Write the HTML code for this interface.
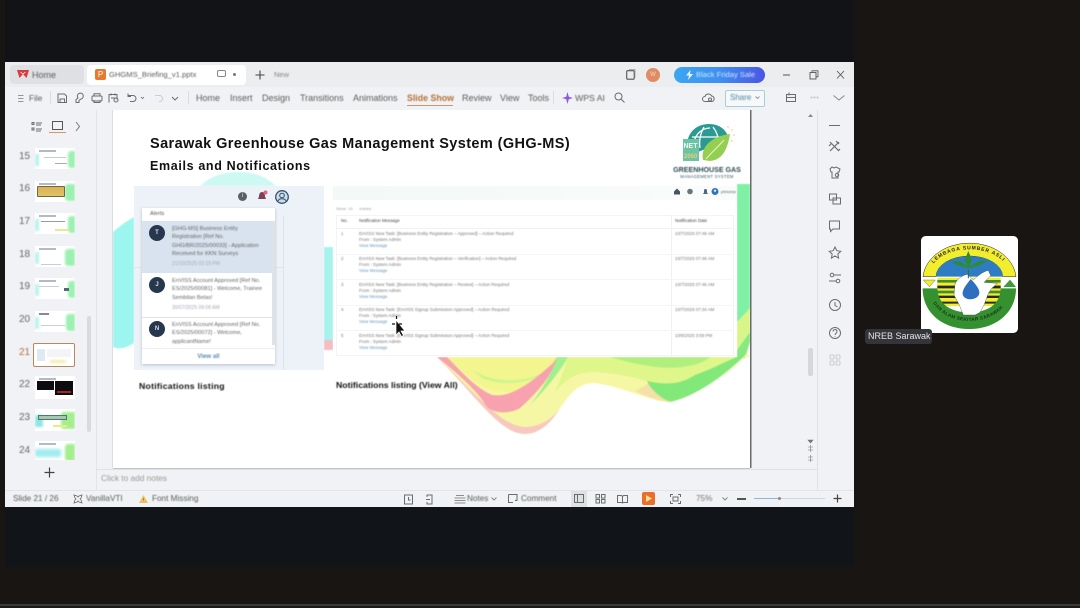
<!DOCTYPE html>
<html lang="en">
<head>
<meta charset="utf-8">
<title>GHGMS Briefing</title>
<style>
html,body{margin:0;padding:0;background:#191513;}
body{width:1080px;height:608px;overflow:hidden;position:relative;font-family:"Liberation Sans",sans-serif;}
.a,.t{position:absolute;}
.t{white-space:nowrap;color:#5c5c5c;font-size:9px;line-height:12px;filter:blur(.4px);}
svg{position:absolute;overflow:visible;}
.ic{fill:none;stroke:#6c6c6c;stroke-width:1;}
.num{font-size:10px;color:#666;}
.thumb{position:absolute;left:35px;width:40px;height:21px;background:#fff;overflow:hidden;}
.thumb i{position:absolute;display:block;}
.g{right:0;top:3px;width:7px;height:17px;background:#9cf0b0;border-radius:3px 0 0 3px;filter:blur(1px);}
.c{left:0;top:6px;width:4px;height:12px;background:#b8f2ee;filter:blur(1px);}
.l{left:4px;top:2px;width:17px;height:1.500px;background:#b5b9c4;}
.s1{font-size:5.600px;line-height:8.400px;color:#666;filter:blur(.4px);}
.s2{font-size:4.400px;line-height:6px;color:#777;filter:blur(.45px);}
.lnk{color:#6a98b8;}
</style>
</head>
<body>
<div class="a" style="left:5px;top:0;width:849px;height:62px;background:#111317;"></div>
<div class="a" style="left:5px;top:507px;width:849px;height:60px;background:#111418;"></div>
<div class="a" style="left:0;top:604px;width:1080px;height:2px;background:#3a3a38;"></div>
<div class="a" style="left:0;top:606px;width:1080px;height:2px;background:#1b1b1b;"></div>

<!-- window -->
<div class="a" style="left:5px;top:62px;width:849px;height:445px;background:#f1f2f5;"></div>
<div class="a" style="left:5px;top:62px;width:849px;height:25px;background:#eceDef;"></div>
<div class="a" style="left:10px;top:65px;width:74px;height:19px;background:#dfe0e3;border-radius:4px;"></div>
<div class="a" style="left:87px;top:65px;width:159px;height:20px;background:#fff;border-radius:4px;"></div>
<div class="a" style="left:96px;top:110px;width:1px;height:380px;background:#e3e4e7;"></div>
<div class="a" style="left:96px;top:469px;width:721px;height:1px;background:#e0e1e4;"></div>
<div class="a" style="left:5px;top:490px;width:849px;height:1px;background:#e3e4e7;"></div>
<div class="a" style="left:817px;top:110px;width:1px;height:380px;background:#e0e1e4;"></div>

<!-- tab row -->
<svg style="left:17px;top:69px" width="12" height="10" viewBox="0 0 12 10"><path d="M0 1h12l-2.500 8L6 5 2.500 9z" fill="#d8393a"/><path d="M3.500 3 6 5l2.500-2" fill="none" stroke="#fff" stroke-width=".8"/></svg>
<div class="t" style="left:32px;top:69px;">Home</div>
<div class="a" style="left:95px;top:69px;width:11px;height:11px;background:#e8792e;border-radius:2px;color:#fff;font-size:8px;line-height:11px;text-align:center;">P</div>
<div class="t" style="left:109px;top:69px;font-size:7.600px;">GHGMS_Briefing_v1.pptx</div>
<svg class="ic" style="left:217px;top:70px" width="9" height="9"><rect x=".5" y=".5" width="8" height="6" rx="1.500" stroke="#888"/></svg>
<div class="a" style="left:233px;top:73px;width:3px;height:3px;background:#777;border-radius:50%;"></div>
<svg style="left:255px;top:70px" width="10" height="10"><path d="M5 .5v9M.5 5h9" stroke="#444" stroke-width="1.100"/></svg>
<div class="t" style="left:274px;top:69px;font-size:7.500px;color:#888;">New</div>
<svg style="left:626px;top:69px" width="10" height="11"><rect x=".7" y="1.700" width="7.500" height="8.500" rx="1" fill="none" stroke="#555" stroke-width="1.100"/><path d="M3 .6h6v8" fill="none" stroke="#999" stroke-width=".8"/></svg>
<div class="a" style="left:646px;top:68px;width:14px;height:14px;background:#e08b62;border-radius:50%;color:#f6d7c5;font-size:6px;line-height:14px;text-align:center;">W</div>
<div class="a" style="left:674px;top:67px;width:91px;height:16px;border-radius:8px;background:linear-gradient(90deg,#3aa7f2,#3f8ff0 50%,#4b55e4);"></div>
<svg style="left:686px;top:70px" width="7" height="10"><path d="M4.500 0 0 5.500h3L2 10l5-6H4z" fill="#e8f4ff"/></svg>
<div class="t" style="left:696px;top:69px;font-size:7.600px;color:#cfe4fb;">Black Friday Sale</div>
<svg style="left:783px;top:70px" width="62" height="10"><path d="M0 5h7" stroke="#555"/><rect x="27" y="2.500" width="6" height="6.500" fill="none" stroke="#555" stroke-width=".9"/><path d="M29 2.500V.8h6v6h-2" fill="none" stroke="#555" stroke-width=".8"/><path d="M54 1l7 7.500M61 1l-7 7.500" stroke="#555" stroke-width=".9"/></svg>

<!-- toolbar -->
<svg style="left:18px;top:95px" width="6" height="8"><path d="M0 .5h5.500M0 3.500h5.500M0 6.500h5.500" stroke="#777" stroke-width=".8"/></svg>
<div class="t" style="left:29px;top:92px;font-size:8.300px;">File</div>
<div class="a" style="left:50px;top:91px;width:1px;height:13px;background:#dcdcdf;"></div>
<svg class="ic" style="left:57px;top:93px" width="120" height="11"><path d="M1 1h6.500L9.500 3v6.500H1zM3 9.500V6h4.500v3.500" /><path d="M19 9.500v-3l2-1.500a3 3 0 1 1 3 1l-2 1.500v2z"/><rect x="35" y="3" width="10" height="5" rx="1"/><path d="M37 3V.8h6V3M37 7v2.500h6V7"/><path d="M52 9.500V1.500h8v5M54 .5v2M58 .5v2M54 5h4"/><circle cx="59" cy="7" r="2"/><path d="M71 2.500h5a3 3 0 0 1 0 6h-3M71 .5v3h3"/><path d="M84 4l1.500 1.500L87 4" stroke-width=".8"/><path d="M98 2.500h5a3 3 0 0 1-1 6" stroke="#ccc"/><path d="M115 4l3 3 3-3" /></svg>
<div class="a" style="left:188px;top:91px;width:1px;height:13px;background:#dcdcdf;"></div>
<div class="t" style="left:196px;top:92px;">Home</div>
<div class="t" style="left:230px;top:92px;">Insert</div>
<div class="t" style="left:262px;top:92px;">Design</div>
<div class="t" style="left:300px;top:92px;">Transitions</div>
<div class="t" style="left:353px;top:92px;">Animations</div>
<div class="t" style="left:407px;top:92px;color:#b3703a;font-weight:bold;font-size:8.800px;">Slide Show</div>
<div class="a" style="left:407px;top:105px;width:46px;height:1px;background:#d0966a;"></div>
<div class="t" style="left:462px;top:92px;">Review</div>
<div class="t" style="left:500px;top:92px;">View</div>
<div class="t" style="left:528px;top:92px;">Tools</div>
<div class="a" style="left:553px;top:91px;width:1px;height:13px;background:#dcdcdf;"></div>
<svg style="left:562px;top:92px" width="11" height="12"><path d="M5.500 0 6.800 4.700 11 6 6.800 7.300 5.500 12 4.200 7.300 0 6 4.200 4.700z" fill="#8a5be0"/></svg>
<div class="t" style="left:575px;top:92px;font-size:8.700px;">WPS AI</div>
<svg class="ic" style="left:614px;top:92px" width="11" height="11"><circle cx="4.500" cy="4.500" r="3.500"/><path d="M7 7l3.500 3.500"/></svg>
<svg class="ic" style="left:702px;top:93px" width="13" height="10"><path d="M3 8.500a2.500 2.500 0 0 1 0-5 3.500 3.500 0 0 1 6.500-.5 2.800 2.800 0 0 1 .5 5.500z"/><circle cx="8" cy="6.500" r="1.500"/></svg>
<div class="a" style="left:725px;top:90px;width:38px;height:15px;border:1px solid #a9cfd6;border-radius:2px;background:#f6f8fa;"></div>
<div class="t" style="left:730px;top:92px;font-size:8px;color:#4f8aa5;">Share</div>
<svg class="ic" style="left:755px;top:96px" width="5" height="4"><path d="M.5.500 2.500 2.500 4.500.5" stroke="#999"/></svg>
<svg class="ic" style="left:785px;top:92px" width="12" height="11"><path d="M1.500 2.500h9v7h-9zM1.500 5.500h9M4 .5v3"/></svg>
<div class="t" style="left:810px;top:91px;color:#555;font-size:9px;">&#8943;</div>
<svg class="ic" style="left:833px;top:95px" width="12" height="6"><path d="M.5.500 6 5l5.500-4.500" stroke="#888"/></svg>

<!-- left panel -->
<svg class="ic" style="left:31px;top:121px" width="56" height="12"><path d="M1 1.500h2v2H1zM1 7h2v2H1zM5 2h6M5 4h5M5 8h6M5 10h5"/><rect x="21.500" y=".5" width="10" height="8" stroke="#555"/><path d="M45 1l3.500 4.500L45 10" stroke="#777"/></svg>
<div class="a" style="left:49px;top:132px;width:17px;height:1px;background:#d99566;"></div>
<div class="a" style="left:87px;top:316px;width:4px;height:116px;background:#d9dadd;border-radius:2px;"></div>

<div class="t num" style="left:19px;top:151px;">15</div>
<div class="t num" style="left:19px;top:183px;">16</div>
<div class="t num" style="left:19px;top:216px;">17</div>
<div class="t num" style="left:19px;top:249px;">18</div>
<div class="t num" style="left:19px;top:281px;">19</div>
<div class="t num" style="left:19px;top:314px;">20</div>
<div class="t num" style="left:19px;top:347px;color:#b3703a;">21</div>
<div class="t num" style="left:19px;top:379px;">22</div>
<div class="t num" style="left:19px;top:412px;">23</div>
<div class="t num" style="left:19px;top:445px;">24</div>

<div class="thumb" style="top:148px;"><i class="g"></i><i class="c"></i><i class="l"></i><i style="left:9px;top:9px;width:22px;height:1px;background:#c5ccd0;"></i><i style="left:20px;top:15px;width:12px;height:1px;background:#aab;"></i></div>
<div class="thumb" style="top:181px;"><i class="g" style="width:10px"></i><i class="l"></i><i style="left:2px;top:5px;width:28px;height:11px;background:linear-gradient(#d9b154,#e3c26a);border:1px solid #6a6a48;border-radius:1px;box-sizing:border-box;"></i></div>
<div class="thumb" style="top:213px;"><i class="g"></i><i class="c"></i><i class="l"></i><i style="left:6px;top:8px;width:24px;height:1px;background:#99a;"></i><i style="left:20px;top:16px;width:14px;height:2px;background:#e9e89a;"></i></div>
<div class="thumb" style="top:246px;"><i class="g" style="width:10px"></i><i class="c"></i><i class="l"></i><i style="left:6px;top:18px;width:20px;height:1px;background:#ccc;"></i></div>
<div class="thumb" style="top:278px;"><i class="g"></i><i class="c"></i><i class="l"></i><i style="left:29px;top:10px;width:5px;height:3px;background:#567;"></i><i style="left:4px;top:8px;width:20px;height:1px;background:#ccd;"></i></div>
<div class="thumb" style="top:311px;"><i class="g" style="width:9px"></i><i class="c"></i><i class="l" style="height:2px;width:10px;background:#889"></i><i style="left:6px;top:14px;width:24px;height:1px;background:#ccd;"></i></div>
<div class="a" style="left:33px;top:343px;width:42px;height:24px;border:1px solid #b9865e;border-radius:2px;box-sizing:border-box;background:#fff;"></div>
<div class="a" style="left:37px;top:349px;width:8px;height:12px;background:#dfe9f2;"></div>
<div class="a" style="left:47px;top:349px;width:24px;height:8px;background:#f2f4f6;"></div>
<div class="a" style="left:50px;top:360px;width:16px;height:3px;background:#f2eea8;filter:blur(1px);"></div>
<div class="thumb" style="top:376px;height:23px;"><i class="l"></i><i style="left:2px;top:5px;width:17px;height:9px;background:#0c0c10;"></i><i style="left:20px;top:5px;width:18px;height:14px;background:#0c0c10;"></i><i style="left:22px;top:15px;width:14px;height:1.500px;background:#a22;"></i></div>
<div class="thumb" style="top:409px;height:22px;"><i class="g" style="width:14px;background:#a4ee90"></i><i class="c" style="width:8px;background:#8fe6e6;"></i><i style="left:3px;top:6px;width:29px;height:5px;background:#a9c6b5;border:1px solid #4e7a6c;box-sizing:border-box;"></i><i style="left:18px;top:16px;width:14px;height:2px;background:#efe88a;"></i></div>
<div class="thumb" style="top:441px;height:19px;"><i class="g" style="width:10px;background:#a4ee90"></i><i style="left:0;top:8px;width:26px;height:8px;background:#9fecef;filter:blur(1.500px);"></i><i class="l"></i></div>
<svg style="left:44px;top:467px" width="11" height="11"><path d="M5.500.5v10M.5 5.500h10" stroke="#444" stroke-width="1.200"/></svg>

<!-- slide -->
<div class="a" style="left:113px;top:110px;width:637px;height:358px;background:#fff;box-shadow:1.500px 0 0 #6b6b6b,0 1px 0 #c4c4c4,-1px 0 0 #ddd;overflow:hidden;">
  <svg style="left:0;top:0" width="637" height="358" viewBox="113 110 637 358">
    <g style="filter:blur(.6px)">
    <path d="M113 232 Q122 224 134 217 V343 Q122 351 113 347z" fill="#9df5ef"/>
    <path d="M200 186 Q215 172 238 172 Q262 172 276 186z" fill="#cdf8f3"/>
    <path d="M324 247 H333 V340 H324z" fill="#a6f3ee"/>
    <path d="M324 340 H333 V350 H324z" fill="#f5bcc4"/>
    <path d="M737 184 H750 V310 L737 322z" fill="#80f0a4"/>
    <path d="M737 322 L750 308 V332 L737 350z" fill="#d8f58a"/>
    <path d="M737 350 L750 332 V342 L745 358 H737z" fill="#86ea80"/>
    <!-- pale outer swoosh -->
    <path d="M437 357 H750 L747 353 C725 375 697 396 670 402 C650 402 620 385 593 383 C575 384 568 398 560 408 C550 425 538 434 525 434 C500 434 477 397 437 357z" fill="#f6f7a4"/>
    <path d="M437 357 C477 397 500 434 525 434 C538 434 550 425 560 408 C552 420 538 427 525 427 C500 426 475 392 437 357z" fill="#f7c8c0"/>
    <!-- lime / green upper right -->
    <path d="M568 357 H737 L745 356 C730 372 710 385 690 395 C660 385 625 372 590 372 C575 373 565 380 555 392 C560 380 565 368 568 357z" fill="#dff68a"/>
    <path d="M610 357 H710 C700 367 670 370 650 366 C635 364 620 360 610 357z" fill="#b0ef7e"/>
    <path d="M647 381 C665 385 680 385 695 375 C715 368 732 358 747 353 C725 375 697 396 670 402 C660 402 652 392 647 381z" fill="#82e87a"/>
    <path d="M648 384 C655 393 663 400 672 402 C662 402 650 398 635 391z" fill="#f5e0a8"/>
    <!-- inner yellow -->
    <path d="M447 357 H557 C553 368 540 380 528 387 C505 397 485 390 470 378z" fill="#f3f68e"/>
    <path d="M470 368 C490 383 525 385 547 370 C535 382 505 388 482 378z" fill="#cdf58e"/>
    <!-- pink band -->
    <path d="M437 357 H447 C458 368 475 388 492 395 C510 398 530 384 553 363 L557 357 C553 375 537 393 520 408 C510 414 495 414 487 407 C478 392 460 375 437 357z" fill="#f7a2ae"/>
    <!-- green chunk -->
    <path d="M557 357 H568 C562 368 550 385 530 405 C540 392 552 375 557 357z" fill="#a0f08c"/>
    </g>
  </svg>
</div>

<div class="t" style="left:150px;top:136px;font-size:14.500px;line-height:16px;font-weight:bold;color:#111;letter-spacing:.4px;filter:blur(.3px);">Sarawak Greenhouse Gas Management System (GHG-MS)</div>
<div class="t" style="left:150px;top:159px;font-size:12.500px;line-height:15px;font-weight:bold;color:#111;letter-spacing:.65px;filter:blur(.3px);">Emails and Notifications</div>

<!-- GHG logo -->
<svg style="left:682px;top:122px;filter:blur(.3px)" width="56" height="42" viewBox="0 0 56 42">
  <path d="M5 24 C5 10 15 2 27 2 C37 2 43 7 46 14 L36 22 L16 30z" fill="#2a9a92"/>
  <path d="M12 20 C14 11 21 6 28 6 M22 5 C18 12 17 20 18 26 M31 5 C35 10 36 15 37 20 M10 15 L44 15" stroke="#fff" stroke-width="1.300" fill="none"/>
  <path d="M21 38 C18 26 29 14 48 12 C46 24 42 38 28 39z" fill="#94cf52"/>
  <path d="M24 37 C30 30 35 26 42 18" stroke="#e8f4c0" stroke-width="1" fill="none"/>
  <rect x="1" y="17" width="16" height="22" fill="#6cc4a4"/>
  <text x="1.500" y="26" font-size="7" fill="#f0fbf5" font-family="Liberation Sans" font-weight="bold">NET</text>
  <text x="2" y="36" font-size="6" fill="#ecd06a" font-family="Liberation Sans" font-weight="bold">2050</text>
  <circle cx="46" cy="5" r=".8" fill="#e6cf70"/><circle cx="50" cy="8" r=".8" fill="#e6cf70"/><circle cx="52" cy="13" r=".8" fill="#e6cf70"/><circle cx="50" cy="19" r=".8" fill="#e6cf70"/>
</svg>
<div class="t" style="left:672px;top:165px;width:70px;text-align:center;font-size:7.100px;line-height:10px;font-weight:bold;color:#2b4a50;">GREENHOUSE GAS</div>
<div class="t" style="left:672px;top:174px;width:70px;text-align:center;font-size:4.200px;line-height:6px;color:#34545a;letter-spacing:.3px;">MANAGEMENT SYSTEM</div>

<!-- alert panel -->
<div class="a" style="left:134px;top:186px;width:190px;height:184px;background:#edf2f8;"></div>
<div class="a" style="left:283px;top:216px;width:1px;height:154px;background:#dde3ea;"></div>
<div class="a" style="left:134px;top:267px;width:149px;height:1px;background:#e0e5ea;"></div>
<div class="a" style="left:238px;top:192px;width:9px;height:9px;border-radius:50%;background:#5a6068;color:#e5e8ea;font-size:6px;line-height:9px;text-align:center;">i</div>
<svg style="left:257px;top:190px" width="11" height="12"><path d="M5 2C3 2 2 4 2 6.500L1 9h8L8 6.500C8 4 7 2 5 2z" fill="#7a4256"/><circle cx="8.500" cy="2.500" r="2" fill="#e75f78"/></svg>
<svg style="left:275px;top:190px" width="14" height="14"><circle cx="7" cy="7" r="6.300" fill="#cfdbe6" stroke="#2e5573" stroke-width="1.300"/><circle cx="7" cy="5.500" r="2.300" fill="none" stroke="#2e5573" stroke-width="1"/><path d="M3 11c1-3 7-3 8 0" fill="none" stroke="#2e5573" stroke-width="1"/></svg>
<div class="a" style="left:142px;top:208px;width:133px;height:156px;background:#fff;box-shadow:0 1px 3px rgba(90,100,120,.35);"></div>
<div class="t" style="left:150px;top:208px;font-size:5.600px;color:#555;">Alerts</div>
<div class="a" style="left:142px;top:221px;width:130px;height:52px;background:#d8e3ef;"></div>
<div class="a" style="left:272px;top:221px;width:3px;height:124px;background:#dfe2e6;"></div>
<div class="a" style="left:142px;top:317px;width:130px;height:1px;background:#dfe2e6;"></div>
<div class="a" style="left:149px;top:225px;width:16px;height:16px;border-radius:50%;background:#27374d;color:#dde;font-size:6px;line-height:16px;text-align:center;font-weight:bold;">T</div>
<div class="a" style="left:149px;top:277px;width:16px;height:16px;border-radius:50%;background:#27374d;color:#dde;font-size:6px;line-height:16px;text-align:center;font-weight:bold;">J</div>
<div class="a" style="left:149px;top:321px;width:16px;height:16px;border-radius:50%;background:#27374d;color:#dde;font-size:6px;line-height:16px;text-align:center;font-weight:bold;">N</div>
<div class="t s1" style="left:172px;top:225px;">[GHG-MS] Business Entity<br>Registration [Ref No.<br>GHG/BR/2025/00033] - Application<br>Received for KKN Surveys</div>
<div class="t s1" style="left:172px;top:260px;color:#a3acb3;font-size:5px;">21/10/2025 02:19 PM</div>
<div class="t s1" style="left:172px;top:277px;">EnVISS Account Approved [Ref No.<br>ES/2025/00081] - Welcome, Trainee<br>Sembilan Belas!</div>
<div class="t s1" style="left:172px;top:304px;color:#a3acb3;font-size:5px;">30/07/2025 09:09 AM</div>
<div class="t s1" style="left:172px;top:321px;">EnVISS Account Approved [Ref No.<br>ES/2025/00072] - Welcome,<br>applicantName!</div>
<div class="a" style="left:142px;top:348px;width:133px;height:16px;background:#fff;"></div>
<div class="t" style="left:142px;top:351px;width:133px;text-align:center;font-size:6.100px;color:#5b8cb0;font-weight:bold;">View all</div>
<div class="a" style="left:142px;top:348px;width:133px;height:1px;background:#eceef0;"></div>
<div class="t" style="left:139px;top:380px;font-size:8.700px;font-weight:bold;color:#111;letter-spacing:.25px;">Notifications listing</div>

<!-- table panel -->
<div class="a" style="left:333px;top:186px;width:404px;height:171px;background:#fff;"></div>
<div class="a" style="left:333px;top:186px;width:404px;height:14px;background:linear-gradient(90deg,#f2f9f7,#fafcfb);"></div>
<svg style="left:672px;top:186px" width="65" height="11"><path d="M2 5.500 5 2.500l3 3v3H2z" fill="#456"/><circle cx="18" cy="5.500" r="2.800" fill="#677"/><path d="M31 8h5l-1-1.500V4.500a1.500 1.500 0 0 0-3 0v2z" fill="#567"/><circle cx="43" cy="5.500" r="3.500" fill="#2f78b7"/><circle cx="43" cy="4.700" r="1.200" fill="#dfe9f2"/></svg>
<div class="t" style="left:721px;top:186px;font-size:4px;line-height:11px;color:#555;">princess</div>
<div class="t s2" style="left:336px;top:206px;color:#999;font-size:4px;">Show&nbsp;&nbsp;10&nbsp;&nbsp;&nbsp;&nbsp;&nbsp;&nbsp;entries</div>
<div class="a" style="left:336px;top:215px;width:398px;height:141px;border:1px solid #f3f4f6;box-sizing:border-box;"></div>
<div class="a" style="left:671px;top:215px;width:1px;height:140px;background:#eff0f2;"></div>
<div class="a" style="left:336px;top:228px;width:398px;height:1px;background:#f0f1f3;"></div>
<div class="a" style="left:336px;top:254px;width:398px;height:1px;background:#f4f5f6;"></div>
<div class="a" style="left:336px;top:279px;width:398px;height:1px;background:#f4f5f6;"></div>
<div class="a" style="left:336px;top:305px;width:398px;height:1px;background:#f4f5f6;"></div>
<div class="a" style="left:336px;top:330px;width:398px;height:1px;background:#f4f5f6;"></div>
<div class="t s2" style="left:341px;top:218px;color:#444;">No.</div>
<div class="t s2" style="left:359px;top:218px;color:#444;">Notification Message</div>
<div class="t s2" style="left:675px;top:218px;color:#444;">Notification Date</div>

<div class="t s2" style="left:341px;top:231px;">1</div>
<div class="t s2" style="left:359px;top:231px;">EnVISS New Task: [Business Entity Registration – Approved] – Action Required<br>From : System Admin<br><span class="lnk">View Message</span></div>
<div class="t s2" style="left:675px;top:231px;">10/7/2025 07:49 AM</div>
<div class="t s2" style="left:341px;top:256px;">2</div>
<div class="t s2" style="left:359px;top:256px;">EnVISS New Task: [Business Entity Registration – Verification] – Action Required<br>From : System Admin<br><span class="lnk">View Message</span></div>
<div class="t s2" style="left:675px;top:256px;">10/7/2025 07:48 AM</div>
<div class="t s2" style="left:341px;top:282px;">3</div>
<div class="t s2" style="left:359px;top:282px;">EnVISS New Task: [Business Entity Registration – Review] – Action Required<br>From : System Admin<br><span class="lnk">View Message</span></div>
<div class="t s2" style="left:675px;top:282px;">10/7/2025 07:46 AM</div>
<div class="t s2" style="left:341px;top:307px;">4</div>
<div class="t s2" style="left:359px;top:307px;">EnVISS New Task: [EnVISS Signup Submission Approved] – Action Required<br>From : System Admin<br><span class="lnk">View Message</span></div>
<div class="t s2" style="left:675px;top:307px;">10/7/2025 07:34 AM</div>
<div class="t s2" style="left:341px;top:333px;">5</div>
<div class="t s2" style="left:359px;top:333px;">EnVISS New Task: [EnVISS Signup Submission Approved] – Action Required<br>From : System Admin<br><span class="lnk">View Message</span></div>
<div class="t s2" style="left:675px;top:333px;">10/6/2025 3:59 PM</div>

<svg style="left:391px;top:316px" width="16" height="21"><path d="M5 4 5 19l3-3 2.500 4.500 2-1L10 15h4z" fill="#111" stroke="#fff" stroke-width=".7"/><path d="M5.500 0v3M1 8h3M8 8h3" stroke="#111" stroke-width="1.200"/></svg>
<div class="t" style="left:336px;top:379px;font-size:8.700px;font-weight:bold;color:#111;">Notifications listing (View All)</div>

<!-- right strip -->
<svg style="left:807px;top:113px" width="7" height="5"><path d="M3.500 1 6 4H1z" fill="#888"/></svg>
<div class="a" style="left:808px;top:348px;width:5px;height:28px;background:#d6d7da;border-radius:2px;"></div>
<svg style="left:807px;top:438px" width="7" height="25"><path d="M1 2h5L3.500 5zM1 9h5M1 12h5M3.500 7v7M1 19h5M1 22h5M3.500 17v7" fill="#777" stroke="#777" stroke-width=".6"/></svg>
<svg class="ic" style="left:828px;top:120px" width="14" height="246" stroke="#666">
  <path d="M1 5.500h11"/>
  <path d="M2 22l9 9M2 31l9-9M8 21l3 3M1 26l2-2M10 31l2-2" stroke-width="1.200"/>
  <path d="M2 49l2-2 2 1 2-1 2 1 2 1-1 3h-1v6H4v-6H3z"/><circle cx="9" cy="55" r="1.700"/>
  <rect x="1.500" y="74" width="7" height="6"/><rect x="5" y="78" width="7.500" height="6"/>
  <path d="M1.500 101h10v8H5l-2.500 2.500V109h-1z"/>
  <path d="M7 127l1.800 3.700 4 .6-3 2.800.8 4L7 136l-3.600 2.100.8-4-3-2.800 4-.6z"/>
  <circle cx="4" cy="155" r="1.800"/><path d="M6 155h7M1 161h7"/><circle cx="10" cy="161" r="1.800"/>
  <circle cx="7" cy="185" r="5.500"/><path d="M7 182v3.500l2.500 1.500"/>
  <circle cx="7" cy="213" r="5.500"/><path d="M5 211.500a2 2 0 1 1 2.500 2l-.5 1.500M7 216.500v.5"/>
  <g stroke="#ccc"><rect x="2" y="235" width="4" height="4" rx="1"/><rect x="8" y="235" width="4" height="4" rx="1"/><rect x="2" y="241" width="4" height="4" rx="1"/><rect x="8" y="241" width="4" height="4" rx="1"/></g>
</svg>

<!-- notes & status -->
<div class="t" style="left:101px;top:472px;font-size:8.300px;color:#999;">Click to add notes</div>
<div class="t" style="left:13px;top:493px;font-size:8.200px;">Slide 21 / 26</div>
<svg class="ic" style="left:73px;top:494px" width="10" height="10"><path d="M1 1l3 1 1 1 1-1 3-1-1 3-1 1 1 1 1 3-3-1-1-1-1 1-3 1 1-3 1-1-1-1z" stroke-width=".8"/></svg>
<div class="t" style="left:86px;top:493px;font-size:8.200px;">VanillaVTI</div>
<svg style="left:139px;top:495px" width="9" height="8"><path d="M4.500 0 9 8H0z" fill="#edc15d"/><path d="M4.500 3v2.500" stroke="#c55" stroke-width=".8"/></svg>
<div class="t" style="left:152px;top:493px;font-size:8.200px;">Font Missing</div>
<svg class="ic" style="left:404px;top:494px" width="32" height="11"><rect x=".5" y="1" width="8" height="9"/><path d="M4.500 3v3h2"/><path d="M23 3V1h5v9h-5V8M22 5.500h4"/></svg>
<svg class="ic" style="left:454px;top:494px" width="12" height="10"><path d="M2 1.500h8M.5 4h11M.5 6.500h11M.5 9h11" stroke-width=".8"/></svg>
<div class="t" style="left:467px;top:493px;font-size:8.200px;">Notes</div>
<svg class="ic" style="left:491px;top:497px" width="6" height="4"><path d="M.5.5 3 3l2.500-2.500" stroke="#888"/></svg>
<svg class="ic" style="left:508px;top:494px" width="10" height="10"><path d="M.5.5h8.500v6H7M5 8.500H.5V.5"/></svg>
<div class="t" style="left:521px;top:493px;font-size:8.200px;">Comment</div>
<div class="a" style="left:571px;top:491px;width:16px;height:16px;background:#dfe0e3;"></div>
<svg class="ic" style="left:574px;top:494px" width="60" height="10"><rect x=".5" y=".5" width="9" height="8"/><path d="M3.500.5v8"/><rect x="22" y=".5" width="3.500" height="3.500"/><rect x="27.500" y=".5" width="3.500" height="3.500"/><rect x="22" y="5.500" width="3.500" height="3.500"/><rect x="27.500" y="5.500" width="3.500" height="3.500"/><path d="M43.500 1.500h4l1 1 1-1h4v7h-4l-1 .5-1-.5h-4zM48.500 2.500v6"/></svg>
<div class="a" style="left:642px;top:492px;width:13px;height:13px;background:#e8702a;border-radius:2px;"></div>
<svg style="left:646px;top:495px" width="6" height="7"><path d="M0 0l6 3.500L0 7z" fill="#f7e09a"/></svg>
<svg class="ic" style="left:670px;top:494px" width="11" height="10"><path d="M.5 3V.5H3M8 .5h2.500V3M.5 7v2.500H3M8 9.500h2.500V7"/><rect x="3" y="3" width="5" height="4"/></svg>
<div class="t" style="left:696px;top:493px;font-size:8.200px;color:#777;">75%</div>
<svg class="ic" style="left:722px;top:497px" width="6" height="4"><path d="M.5.5 3 3l2.500-2.500" stroke="#888"/></svg>
<div class="a" style="left:737px;top:498px;width:9px;height:1.500px;background:#555;"></div>
<div class="a" style="left:754px;top:498px;width:71px;height:1px;background:#d4d6da;"></div>
<div class="a" style="left:754px;top:498px;width:25px;height:1px;background:#8fb6d4;"></div>
<div class="a" style="left:778px;top:497px;width:3px;height:3px;border-radius:50%;background:#888;"></div>
<svg style="left:833px;top:494px" width="9" height="9"><path d="M4.500.5v8M.5 4.500h8" stroke="#444" stroke-width="1.200"/></svg>

<!-- participant tile -->
<svg style="left:921px;top:236px" width="97" height="97" viewBox="183 33 291 291">
  <rect x="183" y="33" width="291" height="291" rx="14" fill="#fff"/>
  <path d="M189 155 A140 110 0 0 1 468 155 H428 A100 62 0 0 0 228 155z" fill="#f2ee2e" stroke="#222" stroke-width="1.500"/>
  <path d="M228 155 A100 62 0 0 1 428 155z" fill="#2e7dc4"/>
  <path d="M190 165h36l-18 20z" fill="#f2ee2e" stroke="#333"/>
  <path d="M430 186l20-22 18 22z" fill="#3f9b3a"/>
  <rect x="232" y="158" width="190" height="85" fill="#f2ee2e"/>
  <path d="M232 165h190v8H232zM232 197h190v8H232z" fill="#3f8f38"/>
  <path d="M232 182h190v8H232zM232 212h190v7H232zM232 230h190v6H232z" fill="#2a2a26"/>
  <path d="M188 190 H232 C234 240 275 262 328 262 C382 262 420 240 422 190 H468 C468 265 405 312 328 312 C250 312 188 265 188 190z" fill="#35902f"/>
  <path d="M285 178 C290 162 308 150 322 148 L340 165 C350 155 368 140 385 136 L392 152 L372 172 L412 175 L395 190 L385 205 L372 240 L360 262 L345 270 H310 L298 240 L282 210z" fill="#fff" stroke="#333" stroke-width="1"/>
  <path d="M332 162 C318 180 306 195 308 208 C312 228 352 228 358 206 C360 192 345 175 332 162z" fill="#2e6fc0"/>
  <path d="M325 78 L336 105 L325 135 L314 105z" fill="#2f8a35"/>
  <path d="M322 130 C300 125 285 118 276 110 C298 106 314 112 322 130zM328 130 C350 125 368 118 382 108 C358 104 340 112 328 130z" fill="#2f8a35"/>
  <path d="M325 135v25" stroke="#2f6a30" stroke-width="3"/>
  <defs>
    <path id="arcTop" d="M208 150 A120 77 0 0 1 448 150"/>
    <path id="arcBot" d="M208 205 A122 95 0 0 0 450 205"/>
  </defs>
  <text font-family="Liberation Sans" font-weight="bold" font-size="15" fill="#223" letter-spacing="2.500"><textPath href="#arcTop" startOffset="12%">LEMBAGA SUMBER ASLI</textPath></text>
  <text font-family="Liberation Sans" font-weight="bold" font-size="14" fill="#17351a" letter-spacing="1"><textPath href="#arcBot" startOffset="10%">DAN ALAM SEKITAR SARAWAK</textPath></text>
</svg>
<div class="a" style="left:865px;top:329px;width:67px;height:15px;background:#33353a;border-radius:3px;"></div>
<div class="t" style="left:868px;top:330px;font-size:9px;line-height:13px;color:#e4e4e4;filter:none;">NREB Sarawak</div>
</body>
</html>
